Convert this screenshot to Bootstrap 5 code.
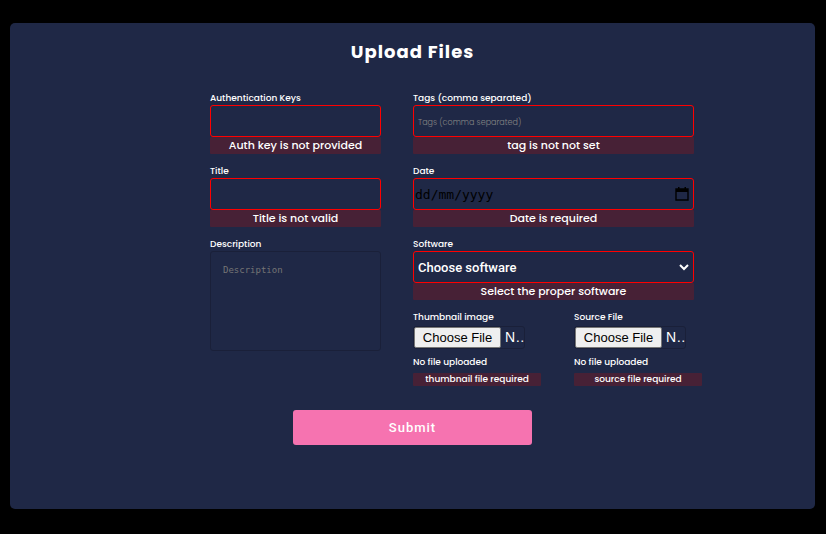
<!DOCTYPE html>
<html lang="en">
<head>
<meta charset="utf-8">
<meta name="viewport" content="width=device-width, initial-scale=1">
<title>Upload Files</title>
<link href="https://cdn.jsdelivr.net/npm/bootstrap@5.3.0/dist/css/bootstrap.min.css" rel="stylesheet">
<style>
  body { background: #000; color: #fff; font-family: Poppins, Inter, sans-serif; }
  .upload-page { padding: 23px 11px 25px 10px; }
  .upload-panel { background: #1f2846; border-radius: 5px; min-height: 486px; padding: 16px 12px 64px; }
  .upload-title { font-size: 18px; line-height: 26px; font-weight: 700; letter-spacing: 1px; margin-bottom: 26px; }
  .upload-fields { grid-template-columns: 171px 281px; column-gap: 32px; width: 484px; max-width: 100%; margin-left: 188px; }
  .field-stack { gap: 10px; min-width: 0; }
  .field-label { display: block; font-size: 9px; line-height: 14px; font-weight: 500; white-space: nowrap; }
  .field-box { display: block; width: 100%; height: 32px; background-color: transparent; border: 1px solid #f00; border-radius: 3px; color: #fff; font-size: 9px; padding: 4px; }
  .field-box::placeholder { color: #757575; opacity: 1; }
  .tag-box { font-size: 8px; font-weight: 300; padding-top: 7px; }
  .tag-box::placeholder { color: #858585; }
  .field-error { background: #472136; border-radius: 1px; font-size: 11px; line-height: 17px; font-weight: 500; }
  .field-area { height: 100px; border-color: #1a2039; padding: 12px; resize: none; font-family: "DejaVu Sans Mono", monospace; }
  .date-group { display: flex; align-items: center; padding: 0 4px 0 1px; }
  .date-entry { flex: 1; min-width: 0; background: transparent; border: 0; padding: 0; color: #000; font: 13px "DejaVu Sans Mono", monospace; }
  .date-entry::placeholder { color: #000; opacity: 1; }
  .date-open { display: flex; background: none; border: 0; padding: 0; color: #000; }
  .field-choice { appearance: none; font: 500 13px Roboto, sans-serif; padding: 0 24px 0 4px; background: url("data:image/svg+xml,%3Csvg xmlns='http://www.w3.org/2000/svg' viewBox='0 0 10 8'%3E%3Cpath d='M1 2l4 4 4-4' fill='none' stroke='white' stroke-width='2'/%3E%3C/svg%3E") no-repeat right 4px center / 10px 8px; }
  .file-pair { grid-template-columns: 128px 128px; column-gap: 33px; }
  .file-entry { display: block; width: 112px; height: 23px; margin-top: 2px; border: 1px solid #1a2039; border-radius: 3px; font: 14px "Liberation Sans", Arial, sans-serif; color: #fff; }
  .file-entry::file-selector-button { height: 21px; width: 87px; margin-right: 4px; padding: 0; border: 1px solid #767676; border-radius: 2px; background: #efefef; color: #000; font-size: 13px; }
  .file-state { font-size: 9px; line-height: 14px; font-weight: 500; margin: 6px 0 4px; }
  .file-error { font-size: 9px; line-height: 13px; }
  .submit-btn { width: 239px; height: 35px; margin-top: 24px; background: #f673b0; border-radius: 3px; color: #fff; font: 500 13px Roboto, sans-serif; letter-spacing: 1px; }
</style>
</head>
<body>
<main class="upload-page">
  <form class="upload-panel" novalidate>
    <h1 class="upload-title text-center">Upload Files</h1>
    <div class="upload-fields d-grid">
      <div class="field-stack d-flex flex-column">
        <div>
          <label class="field-label" for="auth">Authentication Keys</label>
          <input class="field-box" id="auth" type="text">
          <div class="field-error text-center">Auth key is not provided</div>
        </div>
        <div>
          <label class="field-label" for="title">Title</label>
          <input class="field-box" id="title" type="text">
          <div class="field-error text-center">Title is not valid</div>
        </div>
        <div>
          <label class="field-label" for="description">Description</label>
          <textarea class="field-box field-area" id="description" placeholder="Description"></textarea>
        </div>
      </div>
      <div class="field-stack d-flex flex-column">
        <div>
          <label class="field-label" for="tags">Tags (comma separated)</label>
          <input class="field-box tag-box" id="tags" type="text" placeholder="Tags (comma separated)">
          <div class="field-error text-center">tag is not not set</div>
        </div>
        <div>
          <label class="field-label" for="date">Date</label>
          <div class="field-box date-group">
            <input class="date-entry" id="date" type="text" placeholder="dd/mm/yyyy">
            <button class="date-open" type="button" aria-label="Open calendar">
              <svg width="14" height="14" viewBox="0 0 14 14" aria-hidden="true"><path d="M1 2h12v11H1z" fill="none" stroke="currentColor" stroke-width="1.4"/><path d="M1 2h12v3H1zM3 0h1.5v2H3zM9.500 0H11v2H9.500z" fill="currentColor"/></svg>
            </button>
          </div>
          <div class="field-error text-center">Date is required</div>
        </div>
        <div>
          <label class="field-label" for="software">Software</label>
          <select class="field-box field-choice" id="software"><option>Choose software</option></select>
          <div class="field-error text-center">Select the proper software</div>
        </div>
        <div class="file-pair d-grid">
          <div>
            <label class="field-label" for="thumb">Thumbnail image</label>
            <input class="file-entry" id="thumb" type="file">
            <div class="file-state">No file uploaded</div>
            <div class="field-error file-error text-center">thumbnail file required</div>
          </div>
          <div>
            <label class="field-label" for="source">Source File</label>
            <input class="file-entry" id="source" type="file">
            <div class="file-state">No file uploaded</div>
            <div class="field-error file-error text-center">source file required</div>
          </div>
        </div>
      </div>
    </div>
    <button class="submit-btn d-block mx-auto p-0 border-0" type="submit">Submit</button>
  </form>
</main>
<script src="https://cdn.jsdelivr.net/npm/bootstrap@5.3.0/dist/js/bootstrap.bundle.min.js"></script>
</body>
</html>
